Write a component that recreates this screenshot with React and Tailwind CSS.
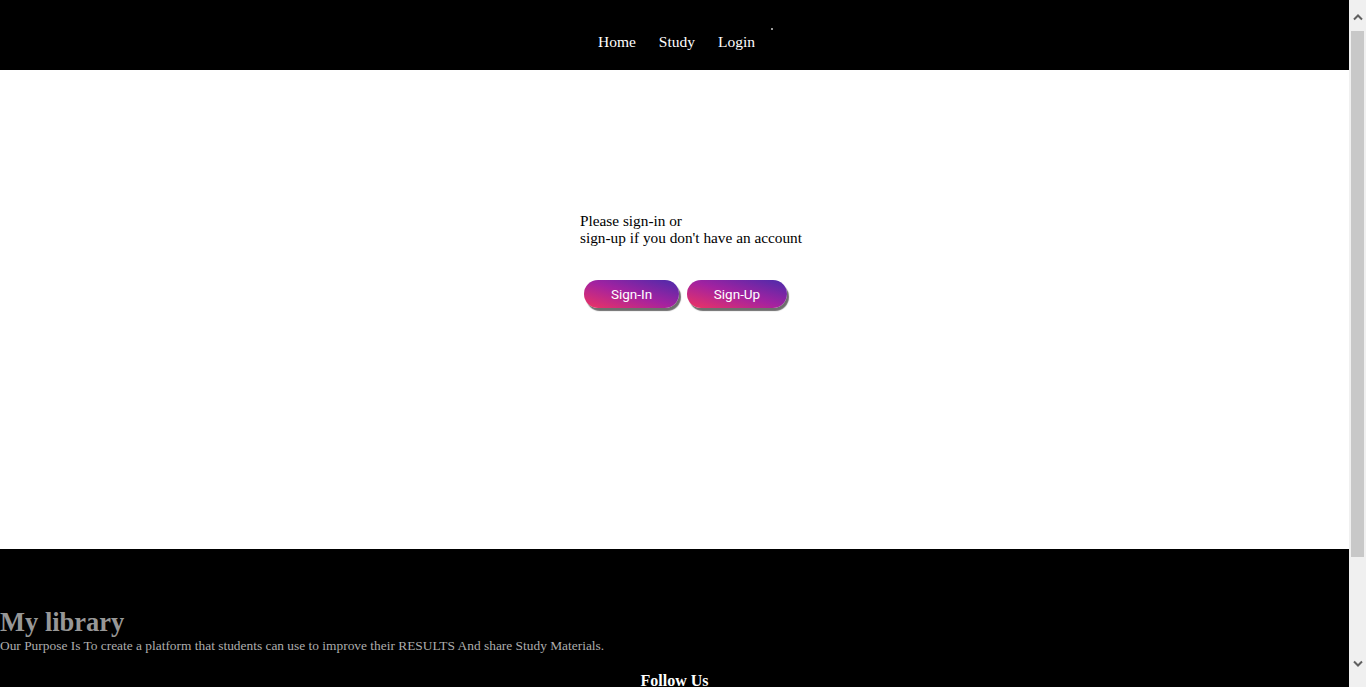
import React from "react";

function Chevron({ down }) {
  return (
    <svg width="10" height="7" viewBox="0 0 10 7" className="block">
      <path
        d={down ? "M1 1.5 L5 5.5 L9 1.5" : "M1 5.5 L5 1.5 L9 5.5"}
        fill="none"
        stroke="#606060"
        strokeWidth="2"
      />
    </svg>
  );
}

function GradButton({ children, w }) {
  return (
    <button
      className={`${w} h-[28px] rounded-full text-white text-[13.5px] bg-[linear-gradient(to_top_right,#ee3462,#a322a0,#4a2bab)] shadow-[2px_3px_1px_#6e6e6e] flex items-center justify-center`}
      style={{ fontFamily: "Roboto, 'Liberation Sans', Arial, sans-serif" }}
    >
      {children}
    </button>
  );
}

export default function App() {
  const serif = { fontFamily: "'Liberation Serif', 'Times New Roman', serif" };
  return (
    <div className="h-[687px] w-full flex overflow-hidden bg-white" style={serif}>
      <div className="flex-1 flex flex-col overflow-hidden">
        <header className="h-[70px] shrink-0 bg-black flex justify-center">
          <nav className="flex gap-[23px] pt-[33px] text-[15.5px] text-white ml-[22px]">
            <a className="leading-[18px]">Home</a>
            <a className="leading-[18px]">Study</a>
            <a className="leading-[18px]">Login</a>
            <span className="w-[2px] h-[2px] bg-[#9a9a9a] mt-[-5px] ml-[-7px]"></span>
          </nav>
        </header>
        <main className="h-[479px] shrink-0 bg-white pl-[580px] pt-[142px]">
          <p className="text-[15.3px] text-black leading-[17px]">
            Please sign-in or
            <br />
            sign-up if you don't have an account
          </p>
          <div className="flex gap-[8px] mt-[34px] ml-[4px]">
            <GradButton w="w-[95px]">Sign-In</GradButton>
            <GradButton w="w-[100px]">Sign-Up</GradButton>
          </div>
        </main>
        <footer className="flex-1 bg-black pt-[58px]">
          <h2 className="text-[26.5px] font-bold text-[#979797] leading-[30px]">My library</h2>
          <p className="text-[13.4px] text-[#adadad] leading-[15px] mt-[1px]">
            Our Purpose Is To create a platform that students can use to improve their RESULTS And share Study Materials.
          </p>
          <h3 className="mt-[19px] text-center text-white font-bold text-[16px] leading-[18px]">Follow Us</h3>
        </footer>
      </div>
      <div className="w-[17px] shrink-0 bg-[#f0f0f0] flex flex-col">
        <div className="h-[31px] flex justify-center pt-[14px]">
          <Chevron />
        </div>
        <div className="h-[526px] mx-[2px] bg-[#c8c8c8]"></div>
        <div className="flex-1 flex flex-col justify-end items-center pb-[20px]">
          <Chevron down />
        </div>
      </div>
    </div>
  );
}
